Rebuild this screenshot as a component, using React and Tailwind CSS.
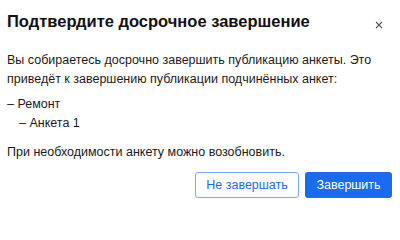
import React from "react";

const Dialog = () => {
  return (
    <div className="w-[400px] h-[210px] bg-white font-['Liberation_Sans',Arial,sans-serif] text-[#1a1a1a]">
      <div className="flex items-start justify-between pl-[7px] pr-[17px] pt-[10px]">
        <h2 className="text-[16.5px] leading-[22px] font-bold text-[#111]">
          Подтвердите досрочное завершение
        </h2>
        <button className="mt-[11px] text-[#555]" aria-label="Закрыть">
          <svg width="8" height="8" viewBox="0 0 8 8" fill="none">
            <path d="M1 1l6 6M7 1L1 7" stroke="currentColor" strokeWidth="1.1" />
          </svg>
        </button>
      </div>

      <div className="px-[7px] pt-[19px] text-[12.5px] leading-[19px]">
        <p>
          Вы собираетесь досрочно завершить публикацию анкеты. Это приведёт к
          завершению публикации подчинённых анкет:
        </p>
        <ul className="mt-[6px]">
          <li>– Ремонт</li>
          <li className="pl-[12px]">– Анкета 1</li>
        </ul>
        <p className="mt-[10px]">При необходимости анкету можно возобновить.</p>
      </div>

      {/* Actions */}
      <div className="flex justify-end gap-[6px] pr-[8px] pt-[10px]">
        <button className="h-[26px] w-[104px] rounded-[3px] border border-[#7ea9f5] text-[12.5px] text-[#1a6bf0]">
          Не завершать
        </button>
        <button className="h-[26px] w-[87px] rounded-[3px] bg-[#1a6bf0] text-[12.5px] text-white">
          Завершить
        </button>
      </div>
    </div>
  );
};

export default function App() {
  return <Dialog />;
}
